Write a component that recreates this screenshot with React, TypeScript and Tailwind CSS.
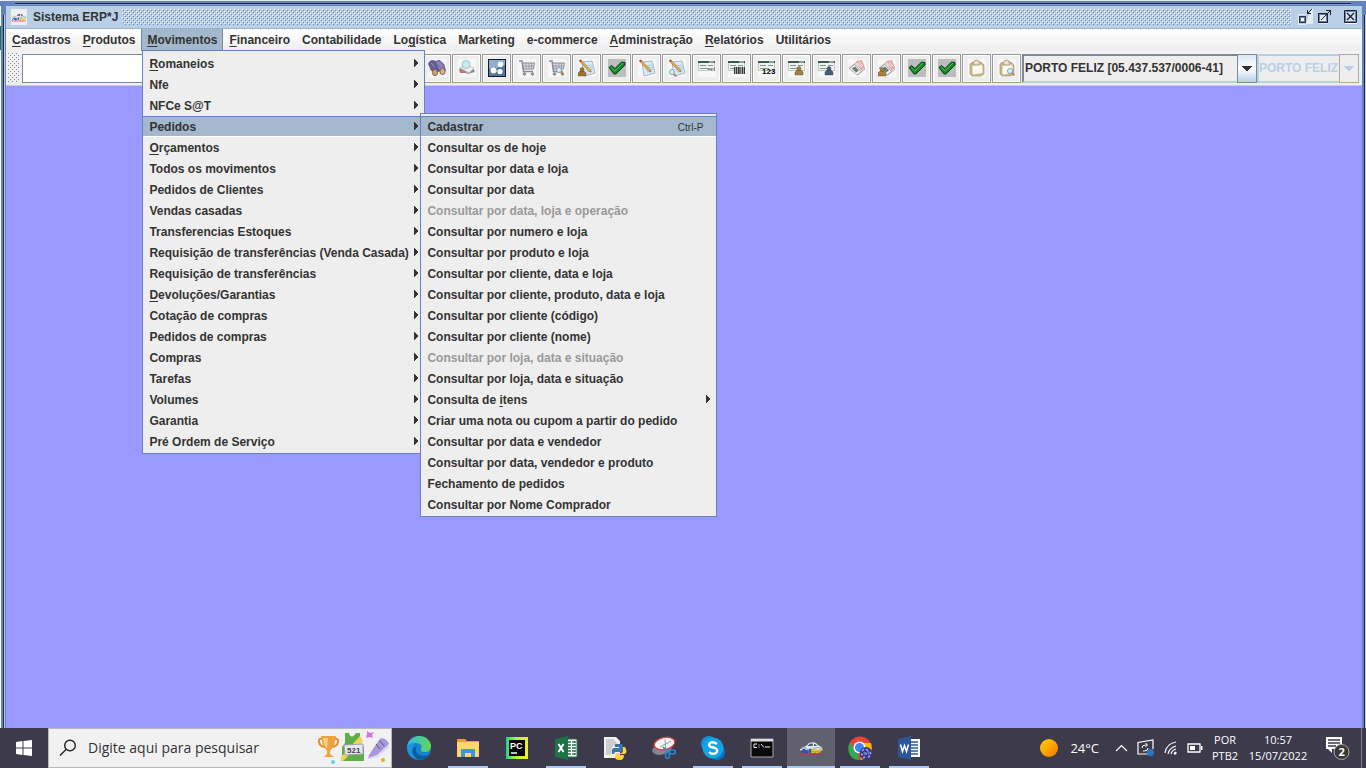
import React from "react";

type Entry = { label: string; key?: number; disabled?: boolean; sub?: boolean; open?: boolean; hint?: string };

const MENUS: Entry[] = [
  { label: "Cadastros", key: 0 },
  { label: "Produtos", key: 0 },
  { label: "Movimentos", key: 0, open: true },
  { label: "Financeiro", key: 0 },
  { label: "Contabilidade" },
  { label: "Logística", key: 2 },
  { label: "Marketing" },
  { label: "e-commerce" },
  { label: "Administração", key: 0 },
  { label: "Relatórios", key: 0 },
  { label: "Utilitários" },
];

const MOVIMENTOS: Entry[] = [
  { label: "Romaneios", key: 0, sub: true },
  { label: "Nfe", sub: true },
  { label: "NFCe S@T", sub: true },
  { label: "Pedidos", sub: true, open: true },
  { label: "Orçamentos", key: 0, sub: true },
  { label: "Todos os movimentos", sub: true },
  { label: "Pedidos de Clientes", sub: true },
  { label: "Vendas casadas", sub: true },
  { label: "Transferencias Estoques", sub: true },
  { label: "Requisição de transferências (Venda Casada)", sub: true },
  { label: "Requisição de transferências", sub: true },
  { label: "Devoluções/Garantias", key: 0, sub: true },
  { label: "Cotação de compras", sub: true },
  { label: "Pedidos de compras", sub: true },
  { label: "Compras", sub: true },
  { label: "Tarefas", sub: true },
  { label: "Volumes", sub: true },
  { label: "Garantia", sub: true },
  { label: "Pré Ordem de Serviço", sub: true },
];

const PEDIDOS: Entry[] = [
  { label: "Cadastrar", hint: "Ctrl-P", open: true },
  { label: "Consultar os de hoje" },
  { label: "Consultar por data e loja" },
  { label: "Consultar por data" },
  { label: "Consultar por data, loja e operação", disabled: true },
  { label: "Consultar por numero e loja" },
  { label: "Consultar por produto e loja" },
  { label: "Consultar por cliente, data e loja" },
  { label: "Consultar por cliente, produto, data e loja" },
  { label: "Consultar por cliente (código)" },
  { label: "Consultar por cliente (nome)" },
  { label: "Consultar por loja, data e situação", disabled: true },
  { label: "Consultar por loja, data e situação" },
  { label: "Consulta de itens", key: 12, sub: true },
  { label: "Criar uma nota ou cupom a partir do pedido" },
  { label: "Consultar por data e vendedor" },
  { label: "Consultar por data, vendedor e produto" },
  { label: "Fechamento de pedidos" },
  { label: "Consultar por Nome Comprador" },
];

function Label({ text, mnemonic }: { text: string; mnemonic?: number }) {
  if (mnemonic === undefined) return <span className="whitespace-pre">{text}</span>;
  return (
    <span className="whitespace-pre">
      {text.slice(0, mnemonic)}
      <span className="underline underline-offset-2">{text[mnemonic]}</span>
      {text.slice(mnemonic + 1)}
    </span>
  );
}

function MenuItem({ entry, children }: { entry: Entry; children?: React.ReactNode }) {
  return (
    <li className="relative">
      <button
        disabled={entry.disabled}
        className={
          "flex h-[21px] w-full items-start justify-between border-y pl-1.5 pr-[5px] text-left text-[12px] leading-[21px] font-bold disabled:text-[#999999] " +
          (entry.open ? "border-t-[#6382bf] border-b-white bg-[#a3b8cc]" : "border-transparent")
        }
      >
        <Label text={entry.label} mnemonic={entry.key} />
        {entry.hint && <span className="pr-2 text-[10px] font-normal">{entry.hint}</span>}
        {entry.sub && (
          <svg className="mt-[5px]" width="5" height="8" viewBox="0 0 5 8" shapeRendering="crispEdges" fill="#333333"><path d="M0 0h1v1h1v1h1v1h1v2h-1v1h-1v1h-1v1h-1z" /></svg>
        )}
      </button>
      {children}
    </li>
  );
}

/* ---------- toolbar drawings, all on an 18x18 grid ---------- */

const Pen = () => <g><path d="M1.500 2l1.500-1 9.500 10 .5 2-2-.5z" fill="#e8b04a" stroke="#8d5c1c" strokeWidth=".5" /><path d="M1 1.500L2.500.5l1.500 1.500-1.500 1.200z" fill="#b9402e" /></g>;
const Note = () => <g><path d="M4 3l10-1 3 12-11 3z" fill="#dcebf7" stroke="#8fa9c4" strokeWidth=".8" /><path d="M7 7l7-1M8 9l7-1M8 11l7-1M9 13l5-1" stroke="#9dc0dd" strokeWidth=".8" /></g>;
const Lens = ({ x, y }: { x: number; y: number }) => <g transform={`translate(${x} ${y})`}><path d="M4.500 4.500l3 3" stroke="#a98a4a" strokeWidth="1.700" /><circle cx="3" cy="3" r="2.500" fill="#d8f1fa" stroke="#7fa5b4" /></g>;
const Person = ({ c, x, y }: { c: string; x: number; y: number }) => <g transform={`translate(${x} ${y})`} fill={c} stroke="#4a3c20" strokeWidth=".4"><path d="M0 9V6l2-2h4l2 2v3z" /><circle cx="4" cy="2.500" r="2" /></g>;
const Card = () => <g><path d="M.500 2.500h16v9H.500z" fill="#eef3ef" stroke="#a8b3ab" strokeWidth=".7" /><path d="M0 2h17v2H0z" fill="#3e5a4c" /><path d="M11 2.500h5v1h-5z" fill="#dce5df" /><path d="M2 6.500h6M2 9.500h9M10 6.500h5" stroke="#7e978a" /></g>;
const Cart = () => <g fill="none" stroke="#8a8798"><path d="M1 2h3l1.500 10.500H15" strokeWidth="1.500" /><path d="M4.500 4H16.500l-1 6H5.500z" fill="#dddbe6" /><path d="M8 4v6M11 4v6M13.500 4v6M5 7h11" strokeWidth=".7" /><circle cx="6.500" cy="15" r="1.300" fill="#999" /><circle cx="14.500" cy="15" r="1.300" fill="#999" /></g>;
const Check = () => <g><rect width="18" height="18" fill="#bdbdbd" /><path d="M1 8.500L3.500 6.500l3.500 3 6.500-6.500 3.500.5v2.500L8 15H6z" fill="#16852a" stroke="#06430f" /><path d="M3 8.500l4 3.500 8-8" fill="none" stroke="#4cbf53" /></g>;
const Clip = () => <g><path d="M2 5l2-1.500 9-.5 3 3v9l-3 2H4l-2-2z" fill="#c9b886" stroke="#a08f5e" strokeWidth=".6" /><path d="M4.500 6.500l8-1 2 1.500v7l-9 1.500-1-1z" fill="#fcfbf2" stroke="#e0d8bb" strokeWidth=".7" /><path d="M5.500 4.500Q5.500 1 8.500 1t3 3.500V6h-6z" fill="#e8e2cc" stroke="#92855c" strokeWidth=".7" /></g>;
const Pages = () => <g><path d="M1 9l8-6 8 7-7 6z" fill="#dcdcdc" stroke="#999" strokeWidth=".7" /><path d="M8 2l6-1 3 8-4 2z" fill="#e3a9ad" /><path d="M1.500 9.500l5-4 7 7-4.500 3.500z" fill="#f1f1f1" stroke="#888" strokeWidth=".6" /><path d="M4 9.500l3-2 4 4-3 2z" fill="#737b75" /><path d="M9 4l5 4M11 3l4 4" stroke="#fff" strokeWidth=".7" /></g>;

const TOOLS: { name: string; art: React.ReactNode }[] = [
  { name: "Localizar", art: <g stroke="#3c3465" strokeWidth=".6"><path d="M.500 5Q1 2 4 1.500L7 2l4 5v5l-3 2-5-3z" fill="#6a5f9b" /><path d="M7 3q2-2 5-1.500l4 4 1.500 6-3.500 3-4-4z" fill="#8379b5" /><ellipse cx="7" cy="13.500" rx="2.600" ry="3.200" fill="#d6a254" /><ellipse cx="14.500" cy="12.500" rx="2.600" ry="3.200" fill="#e3b263" /><path d="M3 4l4 4M10 3.500l4 4" stroke="#b3abd8" /></g> },
  { name: "Consultar livro", art: <g><path d="M1 10l5-4 5 5-3 3-6 0z" fill="#b87480" /><path d="M8 12l7-3 2 4-8 2z" fill="#8c8a92" /><path d="M2 9l5-4 9 4-5 5z" fill="#efefef" stroke="#b4b4bd" strokeWidth=".6" /><circle cx="8" cy="5.500" r="4" fill="#cceaee" stroke="#9cc3c6" /></g> },
  { name: "Engrenagens", art: <g><rect x=".500" y=".500" width="17" height="17" fill="#54779c" stroke="#0f1a2c" /><path d="M1 1h16v5L1 10z" fill="#93aec9" /><g fill="#fff"><circle cx="12.500" cy="5.500" r="2.700" /><circle cx="5.500" cy="11.500" r="2.900" /><circle cx="12" cy="12.500" r="2.600" /></g><path d="M5.500 11.500l6.500 1M7 10l5-4" fill="none" stroke="#d5e4f2" strokeWidth=".8" /></g> },
  { name: "Carrinho", art: <Cart /> },
  { name: "Consultar carrinho", art: <g><Cart /><Lens x={8} y={8} /></g> },
  { name: "Nota do usuário", art: <g><Note /><Pen /><Person c="#9b7632" x={0} y={8} /></g> },
  { name: "Confirmar", art: <Check /> },
  { name: "Editar nota", art: <g><Note /><Pen /></g> },
  { name: "Consultar nota", art: <g><Note /><Pen /><Lens x={1} y={10} /></g> },
  { name: "Cartão", art: <g><Card /><path d="M10 11l1-2 1 2m1-2v2h1v-2m3 0h-1v2h1" fill="none" stroke="#555" strokeWidth=".7" /></g> },
  { name: "Código de barras", art: <g><Card /><path d="M6 8h11v7H6z" fill="#aaa" /><path d="M6.500 8v7M8.500 8v7M10.500 8v7M12 8v7M14.500 8v7M16.500 8v7" stroke="#333" /></g> },
  { name: "Numeração", art: <g><Card /><text x="4" y="15" fontFamily="Liberation Sans" fontSize="8" fontWeight="bold" fill="#000">123</text></g> },
  { name: "Cartão do cliente", art: <g><Card /><Person c="#a48446" x={7} y={7} /></g> },
  { name: "Cartão do vendedor", art: <g><Card /><Person c="#405f80" x={7} y={7} /></g> },
  { name: "Documentos", art: <Pages /> },
  { name: "Documentos do usuário", art: <g><Pages /><Person c="#a98438" x={0} y={8} /></g> },
  { name: "Aprovar", art: <Check /> },
  { name: "Aprovar todos", art: <Check /> },
  { name: "Prancheta", art: <Clip /> },
  { name: "Consultar prancheta", art: <g><Clip /><Lens x={9} y={9} /></g> },
];

const ErpLogo = ({ className }: { className: string }) => (
  <svg className={className} viewBox="0 0 24 16">
    <path d="M1 9.500Q3 6.500 7 6L10 3q4-1.500 7 0l2.500 2.500Q23 6.500 23.500 9v1.500H1z" fill="#dfe8f1" />
    <path d="M8.500 6l2.500-2.200q2-.8 3 0L13.500 6zM15 6V4q2 0 3 2z" fill="#3d5a76" />
    <path d="M2 8.500l4-1 2 1M14 8.500l5-1 4 1" stroke="#8296aa" fill="none" strokeWidth=".8" />
    <path d="M2 12.500l2.500-3h1v3M7 9.500l-.5 3h2l.5-3M10 9.500h2.500M11.200 9.500v3" fill="none" stroke="#1c4fae" strokeWidth="1.300" />
    <path d="M13 12.500l.5-3h2l-.5 3zM17 9.500v3h2l.5-3M21 12.500v-3h1.500" fill="none" stroke="#e7c616" strokeWidth="1.300" />
    <path d="M1 14h21" stroke="#d6284f" strokeWidth="1.300" strokeDasharray="2 .5" />
  </svg>
);

function Combo({ label, value, disabled }: { label: string; value: string; disabled?: boolean }) {
  return (
    <div className={"relative flex h-[29px] " + (disabled ? "w-[102px]" : "w-[235px]")}>
      <select
        aria-label={label}
        disabled={disabled}
        className={
          "h-full w-full appearance-none border-2 text-[12px] font-bold disabled:opacity-100 " +
          (disabled ? "border-[#b8cfe5] bg-[#eeeeee] text-[#b8cfe5]" : "border-[#7a8a99] border-b-[#b8cfe5] bg-[#eeeeee] pl-px text-[#333333]")
        }
      >
        <option>{value}</option>
      </select>
      <span className={"pointer-events-none absolute inset-y-0 right-0 flex w-5 items-center justify-center border " + (disabled ? "border-[#a9a9a9] bg-[#eeeeee]" : "border-[#7a8a99] bg-linear-to-b from-[#dde8f3] via-white to-[#b8cfe5]")}>
        <svg width="10" height="5" viewBox="0 0 10 5" shapeRendering="crispEdges" fill={disabled ? "#b8cfe5" : "#333333"}><path d="M0 0h10v1h-1v1h-1v1h-1v1h-1v1h-2v-1h-1v-1h-1v-1h-1v-1h-1z" /></svg>
      </span>
    </div>
  );
}

/* ---------- taskbar drawings, all on a 24x24 grid ---------- */

const TASKS: { name: string; art: React.ReactNode; state: string }[] = [
  { name: "Microsoft Edge", state: "idle", art: <g><defs><linearGradient id="eg" x1="0" x2="1"><stop offset="0" stopColor="#2fb6ef" /><stop offset="1" stopColor="#62d94d" /></linearGradient></defs><circle cx="12" cy="12" r="12" fill="#1583d0" /><path d="M0 11C1 4 6 0 12 0c7 0 12 5 12 10 0 4-3 6-6 6-3 0-5-1-4-3 2-3-1-6-5-6-4 0-8 2-9 4z" fill="url(#eg)" /><path d="M9 7c-6 2-6 11 1 16-7-1-10-7-10-12 1-2 5-5 9-4z" fill="#1c97df" /><path d="M10 10c-4 6 2 12 12 9-3 4-8 6-12 4-6-4-6-12 0-13z" fill="#105a9f" /></g> },
  { name: "Explorador de Arquivos", state: "running", art: <g><path d="M1 3h8l2 2h12v3H1z" fill="#e9a21f" /><path d="M1 6h22v15H1z" fill="#ffd66d" /><path d="M5 21v-8h14v8h-4v-4H9v4z" fill="#3c96dc" /></g> },
  { name: "PyCharm", state: "idle", art: <g><defs><linearGradient id="pg"><stop stopColor="#20d68a" /><stop offset=".5" stopColor="#b9f23a" /><stop offset="1" stopColor="#f0ee35" /></linearGradient></defs><path d="M1 1h22v22H1z" fill="url(#pg)" /><path d="M4 4h16v16H4z" fill="#070707" /><text x="5" y="13" fontFamily="Liberation Sans" fontSize="9" fontWeight="bold" fill="#fff">PC</text><path d="M6 17h6" stroke="#fff" strokeWidth="1.500" /></g> },
  { name: "Excel", state: "running", art: <g><path d="M12 3h11v18H12z" fill="#fff" stroke="#1f7244" /><path d="M14 6h3M18 6h4M14 9h3M18 9h4M14 12h3M18 12h4M14 15h3M18 15h4M14 18h3M18 18h4" stroke="#1f7244" strokeWidth="1.500" /><path d="M1 3l13-3v24L1 21z" fill="#1f7244" /><path d="M4.500 8l5 8m0-8l-5 8" stroke="#fff" strokeWidth="2" /></g> },
  { name: "Python", state: "idle", art: <g><path d="M1 1h12l4 4v17H1z" fill="#f1f1f1" /><path d="M3 4h8M3 6h10M3 8h11M3 10h7M3 12h6M3 14h5M3 16h5M3 18h5" stroke="#aaa" /><path d="M13 8h5q2 0 2 3v3q0 2-2 2h-5q-2 0-2 2H9q-1-6 2-6h5v-1h-4q-1-3 1-3z" fill="#3776ab" /><path d="M20 11h2q3 5 0 7h-5v1h4q0 5-4 5-5 0-5-3 0-4 3-4h3q2 0 2-3z" fill="#ffd43b" /></g> },
  { name: "Ferramenta de Captura", state: "idle", art: <g><ellipse cx="10" cy="13" rx="10" ry="5.500" fill="#858590" transform="rotate(-15 10 13)" /><ellipse cx="12.500" cy="7.500" rx="10.500" ry="6" fill="#f7f7f9" stroke="#dc3b44" strokeWidth="1.300" transform="rotate(-12 12.500 7.500)" /><path d="M13 3l1 14M8 11l11-6" stroke="#999" /><g fill="none" stroke="#2e83cd" strokeWidth="1.700"><path d="M11 11l5 5" /><ellipse cx="15.500" cy="19.500" rx="2" ry="3" /><ellipse cx="20.500" cy="16" rx="3" ry="2" /></g></g> },
  { name: "Skype", state: "running", art: <g><circle cx="8" cy="8" r="8" fill="#1390d9" /><circle cx="16" cy="16" r="8" fill="#0078ca" /><circle cx="12" cy="12" r="10.500" fill="#13a4e8" /><path d="M16 8q-4-3-7-1-2 3 1 4l4 1q4 2 1 5-4 2-7-1" fill="none" stroke="#fff" strokeWidth="2.400" /></g> },
  { name: "Prompt de Comando", state: "running", art: <g><path d="M1 3h22v18H1z" fill="#0a0a0a" stroke="#a8a8a8" /><path d="M1 3h22v2.500H1z" fill="#dedede" /><path d="M7 8H4v3.500h3M9 8.500v1M9 10.500v1M11 8l3 3.500M15 11h5" stroke="#ededed" fill="none" /></g> },
  { name: "Sistema ERP*J", state: "active", art: null },
  { name: "Google Chrome", state: "running", art: <g><circle cx="12" cy="12" r="11.500" fill="#ea4335" /><path d="M2 6l8 12 1 6C2 24-2 15 2 6z" fill="#34a853" /><path d="M12 7h11c3 10-3 16-11 17l5-10z" fill="#fbbc05" /><circle cx="11.500" cy="11.500" r="6" fill="#fff" /><circle cx="11.500" cy="11.500" r="4.500" fill="#4285f4" /><circle cx="18" cy="17.500" r="6.500" fill="#363a82" /><path d="M14 15l2-2M18 13l2 2M22 16l1 2M13 18l2 1M17 17l2 1M15 22l2-1M20 21l2-1" stroke="#a8a1e8" strokeWidth="1.500" fill="none" /><path d="M16 16l1 3M20 15l1 4" stroke="#6174ce" strokeWidth="1.500" /></g> },
  { name: "Word", state: "running", art: <g><path d="M12 3h11v18H12z" fill="#fff" /><path d="M14 6h7M14 9h7M14 12h7M14 15h7M14 18h7" stroke="#2b579a" strokeWidth="1.500" /><path d="M1 3l13-3v24L1 21z" fill="#2b579a" /><path d="M3.500 8.500l2 7 2-6 2 6 2-7" fill="none" stroke="#fff" strokeWidth="1.500" /></g> },
];

function TitleBar() {
  return (
    <header className="flex h-[23px] items-center border-b border-[#9cb2cc] bg-[#b8cfe5] pl-[5px] pr-1">
      <span className="flex size-4 items-center bg-[#eeeeee]"><ErpLogo className="h-3 w-4" /></span>
      <h1 className="ml-1.5 text-[12px] leading-4 font-bold">Sistema ERP*J</h1>
      <svg className="ml-1 h-4 min-w-0 flex-1" shapeRendering="crispEdges" aria-hidden="true">
        <defs>
          <pattern id="bumps" width="4" height="4" patternUnits="userSpaceOnUse">
            <path d="M0 0h1v1H0zM2 2h1v1H2z" fill="#fff" />
            <path d="M1 1h1v1H1zM3 3h1v1H3z" fill="#6382bf" />
          </pattern>
        </defs>
        <rect width="100%" height="100%" fill="url(#bumps)" />
      </svg>
      <div className="ml-1.5 flex items-center">
        <button aria-label="Minimizar" className="size-4">
          <svg viewBox="0 0 16 16" shapeRendering="crispEdges"><path d="M1 5h7v1H2v9H1zM14 0h2v15H9v1H1v-1h8z" fill="#fff" opacity=".6" /><path d="M2.500 7.500h6v6h-6z" fill="#fff" stroke="#333" /><path d="M3.500 8.500h4v4h-4z" fill="none" stroke="#6382bf" /><path d="M10 1h1v3h3v1h-4zM11 3h1V2h1V1h1V0h1v1h-1v1h-1v1h-1v1h-1z" fill="#222" /></svg>
        </button>
        <button aria-label="Maximizar" className="ml-1 size-4">
          <svg viewBox="0 0 16 16" shapeRendering="crispEdges"><path d="M1 4h10v11H1z" fill="#dfe9f4" /><path d="M1.500 4.500h9v9h-9z" fill="none" stroke="#222" /><path d="M2.500 5.500h7v7h-7z" fill="none" stroke="#6382bf" /><path d="M9 1h5v5h-1V3h-1v1h-1v1h-1v1H9v1H8v1H7v1H6v1H5v1H4v-1h1V9h1V8h1V7h1V6h1V5h1V4h1V3h1V2H9z" fill="#222" /></svg>
        </button>
        <button aria-label="Fechar" className="ml-[9px] size-4">
          <svg viewBox="0 0 16 16"><path d="M3 3h12v12H3z" fill="#fff" /><path d="M2.500 1.500h12v12h-12z" fill="#d4e1ee" stroke="#222" /><path d="M3.500 2.500h10v10h-10z" fill="none" stroke="#6382bf" /><path d="M5 4l7 7m0-7l-7 7" stroke="#222" strokeWidth="1.400" /></svg>
        </button>
      </div>
    </header>
  );
}

function MenuBar() {
  return (
    <nav className="bg-linear-to-b from-white to-[#eeeeee]">
      <ul className="flex h-[22px]">
        {MENUS.map((m) => (
          <li key={m.label} className="relative">
            <button className={"flex h-[22px] items-center border-x px-[5px] text-[12px] leading-4 font-bold " + (m.open ? "border-[#7a8a99] bg-[#a3b8cc]" : "border-transparent")}>
              <Label text={m.label} mnemonic={m.key} />
            </button>
            {m.open && (
              <ul className="absolute top-[21px] left-px z-10 w-[283px] border border-[#6382bf] bg-[#eeeeee] pt-0.5 pb-px">
                {MOVIMENTOS.map((e) => (
                  <MenuItem key={e.label} entry={e}>
                    {e.open && (
                      <ul className="absolute -top-[3px] left-[277px] z-20 w-[297px] border border-[#6382bf] bg-[#eeeeee] pt-0.5 pb-px">
                        {PEDIDOS.map((p, i) => <MenuItem key={i} entry={p} />)}
                      </ul>
                    )}
                  </MenuItem>
                ))}
              </ul>
            )}
          </li>
        ))}
      </ul>
    </nav>
  );
}

function ToolBar() {
  return (
    <div role="toolbar" className="flex h-[35px] items-center border-b border-[#cccccc] bg-linear-to-b from-[#f3f3f3] to-[#eeeeee] pr-[3px] pl-0.5">
      <svg width="11" height="30" shapeRendering="crispEdges" aria-hidden="true">
        <defs>
          <pattern id="grip" width="4" height="4" patternUnits="userSpaceOnUse"><path d="M0 0h1v1H0zM2 2h1v1H2z" fill="#7a8a99" /></pattern>
        </defs>
        <rect width="11" height="30" fill="url(#grip)" />
      </svg>
      <input aria-label="Comando" className="ml-[3px] h-[29px] min-w-0 flex-1 border border-[#7a8a99] bg-white px-1 text-[12px] outline-none" />
      <div className="flex gap-px">
        {TOOLS.map((t) => (
          <button key={t.name} aria-label={t.name} title={t.name} className="flex h-[29px] w-[29px] items-center justify-center border border-[#999999] bg-[#eeeeee] ring-1 ring-white ring-inset">
            <svg width="18" height="18" viewBox="0 0 18 18" className="bg-[#f7f7f7]">{t.art}</svg>
          </button>
        ))}
      </div>
      <div className="ml-px flex">
        <Combo label="Loja" value="PORTO FELIZ [05.437.537/0006-41]" />
        <Combo label="Cidade" value="PORTO FELIZ" disabled />
      </div>
    </div>
  );
}

function TaskBar() {
  return (
    <footer className="flex h-10 shrink-0 bg-[#3c3a4b] font-['Open_Sans',sans-serif] text-white">
      <button aria-label="Iniciar" className="flex w-12 items-center justify-center">
        <svg width="16" height="16" viewBox="0 0 16 16" fill="#fff"><path d="M0 2l6.500-1v6.500H0zM7.500 1L16 0v7.500H7.500zM0 8.500h6.500V15L0 14zM7.500 8.500H16V16l-8.500-1z" /></svg>
      </button>
      <label className="flex w-[344px] items-center border border-[#b9b9b9] bg-[#f1f1f1] pl-2.5">
        <svg width="18" height="18" viewBox="0 0 18 18" fill="none" stroke="#222" strokeWidth="1.400"><circle cx="11" cy="6.500" r="5.300" /><path d="M7 10.500l-6 6" /></svg>
        <input aria-label="Pesquisar" placeholder="Digite aqui para pesquisar" className="ml-[11px] min-w-0 flex-1 bg-transparent text-[14px] leading-5 outline-none placeholder:text-[#333333] placeholder:opacity-100" />
        <svg width="74" height="34" viewBox="0 0 74 34" aria-hidden="true">
          <path d="M6 8q-5-1-4 3 1 5 7 5M17 8q5-1 4 3-1 5-7 5" fill="none" stroke="#e78d2e" strokeWidth="2" /><path d="M4 5h15l-2 10-4 5v3l4 3H7l3-3v-3l-4-5z" fill="#f0a23e" /><path d="M6 7h5l-1 11-3-5z" fill="#ffd07c" />
          <path d="M28 2h4q2 7 7 0h4v10l4 4v14H25V16l3-4z" fill="#5fae4c" /><path d="M43 5l3 5-20 20h-2v-4z" fill="#f5d34e" /><path d="M27 14l19-1v10l-18 1z" fill="#e8e8ef" stroke="#a0a0aa" /><text x="30" y="22" fontFamily="Liberation Sans" fontSize="8" fontWeight="bold" fill="#444">521</text>
          <path d="M50 0l3 2 4-1-2 3 1 3-3-1-4 1 1-4z" fill="#cf73eb" /><path d="M52 24l8-12 4-5 4 1 4 4-1 4-12 10-8 2z" fill="#a799d6" /><path d="M51 27l9-3 12-11v4L60 27l-9 1z" fill="#e5d9f8" /><path d="M62 9l5 6M59 13l4 5" stroke="#5b5092" /><circle cx="16" cy="31" r="2" fill="#67cfe2" /><circle cx="66" cy="29" r="2" fill="#f6a81d" />
        </svg>
      </label>
      <div className="flex gap-px pl-[3px]">
        {TASKS.map((t) => (
          <button key={t.name} aria-label={t.name} title={t.name} className={"flex w-12 flex-col items-center " + (t.state === "active" ? "bg-[#61606d]" : "")}>
            <span className="flex flex-1 items-center pt-0.5">
              {t.art ? <svg width="24" height="24" viewBox="0 0 24 24">{t.art}</svg> : <ErpLogo className="h-4 w-6" />}
            </span>
            <span className={"h-0.5 " + (t.state === "active" ? "w-full bg-[#a9c9f2]" : t.state === "running" ? "w-10 bg-[#a9c9f2]" : "w-10")} />
          </button>
        ))}
      </div>
      <div className="ml-auto flex items-center text-[11px] leading-4">
        <span className="size-[18px] rounded-full bg-linear-to-br from-[#ffd000] to-[#f57600]" />
        <span className="ml-3 text-[13px]">24°C</span>
        <button aria-label="Mostrar ícones ocultos" className="ml-4">
          <svg width="13" height="8" viewBox="0 0 13 8" fill="none" stroke="#fff" strokeWidth="1.200"><path d="M1 7l5.500-5.500L12 7" /></svg>
        </button>
        <svg className="ml-[9px]" width="18" height="18" viewBox="0 0 18 18" fill="none" stroke="#fff" strokeWidth="1.200"><path d="M13 15H1V3.500L16 1v9" /><path d="M5 9q0-3 3.500-3H10M8.500 4l2 2-2 2M11 9q0 3-3.500 3H6" strokeWidth="1" /><circle cx="13.500" cy="13.500" r="3.500" fill="#2c76c8" stroke="none" /></svg>
        <svg className="ml-2" width="16" height="16" viewBox="0 0 16 16" fill="none" stroke="#fff"><path d="M2 13Q3 4 13 2M5 14q1-6 8-8M8 14q1-4 5-5" strokeWidth="1.200" /><path d="M11 14q0-2 2-2v2z" fill="#fff" /></svg>
        <svg className="ml-2" width="16" height="10" viewBox="0 0 16 10"><path d="M1 1h12v8H1z" fill="none" stroke="#fff" strokeWidth="1.300" /><path d="M3 3h5v4H3zM14 3h1.500v4H14z" fill="#fff" /></svg>
        <span className="ml-2 flex w-7 flex-col text-center"><span>POR</span><span>PTB2</span></span>
        <time className="ml-2 flex w-[62px] flex-col text-center"><span>10:57</span><span>15/07/2022</span></time>
        <button aria-label="Notificações" className="mr-2.5 ml-4">
          <svg width="26" height="26" viewBox="0 0 26 26"><path d="M1 2h16v12H7v4l-4-4H1z" fill="#fff" /><path d="M3 5h12M3 8h12M3 11h8" stroke="#3c3a4b" strokeWidth="1.300" /><circle cx="16.500" cy="17" r="7.500" fill="#393939" stroke="#a9a9a9" /><text x="13.500" y="21" fontFamily="Open Sans" fontSize="11" fontWeight="bold" fill="#fff">2</text></svg>
        </button>
        <span className="h-10 w-[5px] border-l border-[#85838f]" />
      </div>
    </footer>
  );
}

export default function App() {
  return (
    <div className="flex h-screen flex-col overflow-hidden bg-[#6382bf] font-['Liberation_Sans',sans-serif] text-[#333333]">
      <div className="h-[6px] shrink-0 border-t border-[#e8edf5] px-[15px] pt-0.5">
        <div className="h-px bg-[#222a3a]" />
        <div className="h-px bg-[#7f9bd0]" />
      </div>
      <div className="flex min-h-0 flex-1">
        <div className="flex w-[6px] shrink-0">
          <div className="flex w-px flex-col bg-white"><span className="mt-5 h-6 bg-[#217346]" /></div>
          <div className="mt-[9px] ml-0.5 w-px bg-[#222a3a]" />
          <div className="mt-[9px] w-px bg-[#b8cfe5]" />
        </div>
        <div className="flex min-w-0 flex-1 flex-col">
          <TitleBar />
          <MenuBar />
          <ToolBar />
          <main className="flex-1 bg-[#9999ff]" />
        </div>
        <div className="flex w-1 shrink-0 pl-0.5"><div className="mt-[9px] w-px bg-[#222a3a]" /><div className="mt-[9px] w-px bg-[#b8cfe5]" /></div>
      </div>
      <TaskBar />
    </div>
  );
}
